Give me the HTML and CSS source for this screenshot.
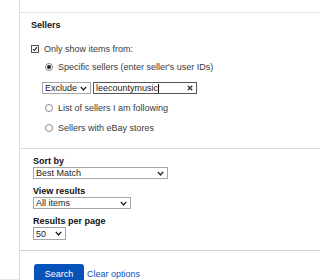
FILE: index.html
```html
<!DOCTYPE html>
<html>
<head>
<meta charset="utf-8">
<link rel="stylesheet" href="styles.css">
</head>
<body>
<div class="page">
  <div class="side"></div>
  <div class="panel">
    <div class="prev"></div>
    <section class="sellers">
      <h3 class="sec-title">Sellers</h3>
      <div class="row check-row">
        <span class="checkbox"><svg viewBox="0 0 8 8"><path d="M1.4 4.1 L3.2 6 L6.7 1.6"/></svg></span>
        <span>Only show items from:</span>
      </div>
      <div class="radio-group">
        <div class="row"><span class="radio on"></span><span>Specific sellers (enter seller's user IDs)</span></div>
        <div class="id-row">
          <div class="select sel-excl"><span>Exclude</span><svg class="chev" viewBox="0 0 7 5"><polyline points="0.8,0.9 3.5,3.9 6.2,0.9"/></svg></div>
          <div class="textbox"><span>leecountymusic</span><span class="caret"></span><svg class="clear" viewBox="0 0 6 6"><path d="M0.8 0.8 L5.2 5.2 M5.2 0.8 L0.8 5.2"/></svg></div>
        </div>
        <div class="row gap9"><span class="radio"></span><span>List of sellers I am following</span></div>
        <div class="row gap10"><span class="radio"></span><span>Sellers with eBay stores</span></div>
      </div>
    </section>
    <section class="display">
      <div class="field">
        <div class="label">Sort by</div>
        <div class="select sel-sort"><span>Best Match</span><svg class="chev" viewBox="0 0 7 5"><polyline points="0.8,0.9 3.5,3.9 6.2,0.9"/></svg></div>
      </div>
      <div class="field">
        <div class="label">View results</div>
        <div class="select sel-view"><span>All items</span><svg class="chev" viewBox="0 0 7 5"><polyline points="0.8,0.9 3.5,3.9 6.2,0.9"/></svg></div>
      </div>
      <div class="field">
        <div class="label">Results per page</div>
        <div class="select sel-per"><span>50</span><svg class="chev" viewBox="0 0 7 5"><polyline points="0.8,0.9 3.5,3.9 6.2,0.9"/></svg></div>
      </div>
    </section>
    <section class="actions">
      <button class="btn" type="button">Search</button>
      <a class="link" href="#">Clear options</a>
    </section>
  </div>
</div>
</body>
</html>
```

FILE: styles.css
```css
html, body {
  margin: 0;
  padding: 0;
  background: #fff;
}
body {
  font-family: "Liberation Sans", Arial, sans-serif;
  font-size: 9px;
  color: #3a3a3a;
}
.page {
  display: flex;
  height: 280px;
  overflow: hidden;
}
.side {
  flex: none;
  width: 19px;
  height: 279px;
  border-bottom: 1px solid #e6e6e6;
}
.panel {
  flex: 1;
  border-left: 1px solid #dcdcdc;
}
.prev {
  height: 12px;
  border-bottom: 1px solid #e4e4e4;
}
.sellers {
  padding: 7px 0 15px 11px;
}
.sec-title {
  margin: 0;
  font-size: 9px;
  font-weight: bold;
  line-height: 10px;
  color: #111;
}
.row {
  display: flex;
  align-items: center;
  height: 10px;
  line-height: 10px;
  white-space: nowrap;
}
.check-row {
  margin-top: 14px;
}
.checkbox {
  flex: none;
  width: 8px;
  height: 8px;
  box-sizing: border-box;
  border: 1px solid #555;
  background: #fff;
  margin-right: 5px;
  display: flex;
}
.checkbox svg {
  width: 6px;
  height: 6px;
  fill: none;
  stroke: #222;
  stroke-width: 1.4;
}
.radio-group {
  margin-top: 8px;
  padding-left: 14px;
}
.radio {
  flex: none;
  width: 8px;
  height: 8px;
  box-sizing: border-box;
  border: 1px solid #888;
  border-radius: 50%;
  margin-right: 5px;
  display: flex;
  align-items: center;
  justify-content: center;
  background: #fff;
}
.radio.on::after {
  content: "";
  width: 4px;
  height: 4px;
  border-radius: 50%;
  background: #222;
}
.id-row {
  display: flex;
  gap: 2px;
  margin-top: 10px;
  margin-left: -3px;
  height: 12px;
}
.gap9 {
  margin-top: 9px;
}
.gap10 {
  margin-top: 10px;
}
.select {
  display: flex;
  align-items: center;
  justify-content: space-between;
  box-sizing: border-box;
  height: 12px;
  border: 1px solid #a6a6a6;
  padding: 0 3px 0 2px;
  line-height: 10px;
  color: #222;
  background: #fff;
  white-space: nowrap;
}
.chev {
  flex: none;
  width: 7px;
  height: 5px;
  fill: none;
  stroke: #222;
  stroke-width: 1.4;
}
.sel-excl {
  width: 49px;
}
.sel-sort {
  width: 135px;
}
.sel-view {
  width: 98px;
}
.sel-per {
  width: 33px;
  height: 13px;
}
.textbox {
  display: flex;
  align-items: center;
  box-sizing: border-box;
  width: 104px;
  height: 12px;
  border: 1px solid #555;
  padding: 0 3px 0 2px;
  line-height: 10px;
  color: #222;
  white-space: nowrap;
}
.caret {
  width: 1px;
  height: 9px;
  background: #111;
}
.clear {
  margin-left: auto;
  width: 6px;
  height: 6px;
  fill: none;
  stroke: #333;
  stroke-width: 1.3;
}
.display {
  border-top: 1px solid #dcdcdc;
  padding: 7px 0 10px 13px;
}
.field + .field {
  margin-top: 7px;
}
.label {
  font-weight: bold;
  line-height: 11px;
  color: #111;
}
.actions {
  border-top: 1px solid #cfcfcf;
  padding: 13px 0 0 14px;
  display: flex;
  align-items: center;
}
.btn {
  width: 50px;
  height: 20px;
  border: none;
  border-radius: 3px;
  background: #0654ba;
  color: #fff;
  font-family: "Liberation Sans", Arial, sans-serif;
  font-size: 9px;
  padding: 0;
}
.link {
  margin-left: 3px;
  color: #0654ba;
  text-decoration: none;
  font-size: 9px;
}
```
